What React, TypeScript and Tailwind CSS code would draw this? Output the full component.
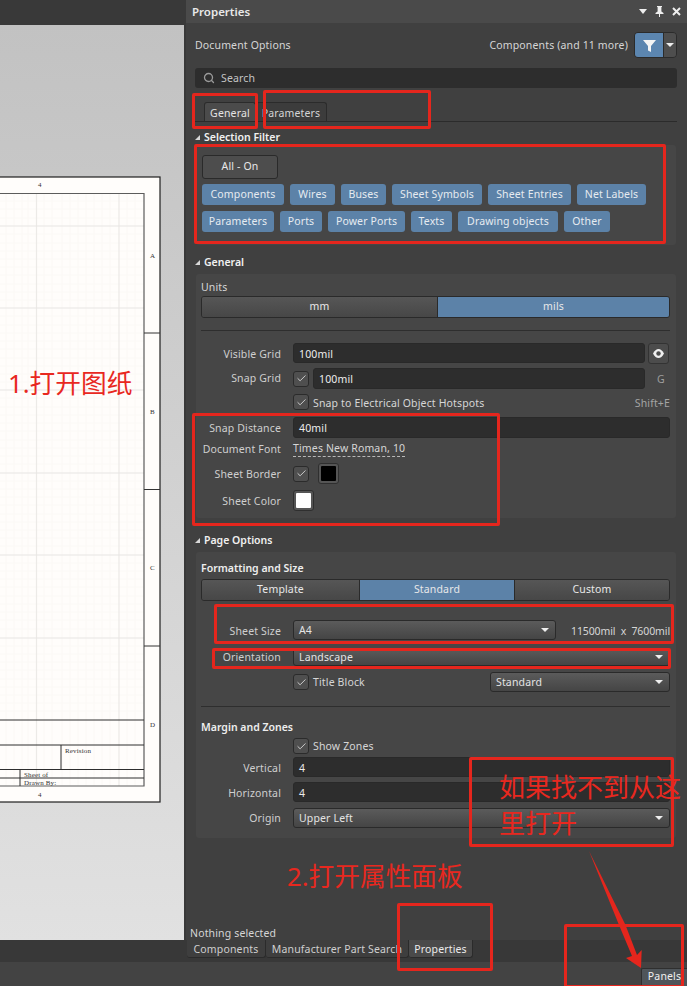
import { Check, Search } from "lucide-react";

const RED = "border-[3px] border-[#e5261d] rounded-[2px]";

const row1 = [
  { label: "Components", width: "w-[82px]" },
  { label: "Wires", width: "w-[45px]" },
  { label: "Buses", width: "w-[45px]" },
  { label: "Sheet Symbols", width: "w-[90px]" },
  { label: "Sheet Entries", width: "w-[83px]" },
  { label: "Net Labels", width: "w-[69px]" },
];
const row2 = [
  { label: "Parameters", width: "w-[72px]" },
  { label: "Ports", width: "w-[42px]" },
  { label: "Power Ports", width: "w-[77px]" },
  { label: "Texts", width: "w-[41px]" },
  { label: "Drawing objects", width: "w-[100px]" },
  { label: "Other", width: "w-[46px]" },
];

function Chip({ label, width }: { label: string; width: string }) {
  return (
    <div className={`${width} h-[21px] flex items-center justify-center rounded-[3px] bg-[#5c82a8] text-[#e6ebf0] whitespace-nowrap`}>
      {label}
    </div>
  );
}

function Heading({ label, className }: { label: string; className: string }) {
  return (
    <div className={`h-[14px] ml-[9px] flex items-center gap-[4px] font-semibold tracking-normal text-[#f0f0f0] ${className}`}>
      <span className="w-0 h-0 border-l-[5px] border-l-transparent border-b-[5px] border-b-[#d8d8d8]" />
      {label}
    </div>
  );
}

// low = text sits one pixel under the row's centre, as most rows do in the reference
function Label({ children, low = true }: { children: string; low?: boolean }) {
  return (
    <div className={`w-[80px] mr-3 shrink-0 text-right text-[#cfcfcf] whitespace-nowrap ${low ? "pt-[2px]" : ""}`}>
      {children}
    </div>
  );
}

function Checkbox() {
  return (
    <div className="w-[16px] h-[16px] shrink-0 rounded-[3px] border border-[#2b2b2b] bg-[#4f4f4f] flex items-center justify-center">
      <Check size={11} strokeWidth={1.8} className="text-[#e4e4e4]" />
    </div>
  );
}

function Input({ value, className }: { value: string; className: string }) {
  return (
    <div className={`rounded-[3px] bg-[#2d2d2d] border border-[#292929] pl-[5px] pt-[2px] flex items-center text-[#ececec] ${className}`}>
      {value}
    </div>
  );
}

function Select({ value, className }: { value: string; className: string }) {
  return (
    <div className={`rounded-[3px] bg-gradient-to-b from-[#5b5b5b] to-[#454545] border border-[#2a2a2a] pl-[5px] pr-[6px] flex items-center justify-between text-[#e4e4e4] ${className}`}>
      {value}
      <span className="w-0 h-0 border-x-[4px] border-x-transparent border-t-[4px] border-t-[#eeeeee]" />
    </div>
  );
}

function Segments({ items, active, widths }: { items: string[]; active: number; widths: string[] }) {
  return (
    <div className="h-[22px] flex rounded-[3px] border border-[#2a2a2a] overflow-hidden">
      {items.map((item, i) => (
        <div
          key={item}
          className={`${widths[i]} pb-[2px] flex items-center justify-center text-[#e8e8e8] ${i > 0 ? "border-l border-[#2a2a2a]" : ""} ${
            i === active ? "bg-[#5c82a8]" : "bg-gradient-to-b from-[#565656] to-[#474747]"
          }`}
        >
          {item}
        </div>
      ))}
    </div>
  );
}

function Sheet() {
  const minorX = [6, 14, 22, 28, 44, 52, 62, 70, 78, 86, 94, 102, 110, 127, 135];
  const minorY = [201, 209, 218, 234, 243, 251, 259, 267, 275, 284, 292, 300, 316, 325, 333, 341, 349, 358, 366, 374, 382, 398, 407, 415, 423, 431, 440, 448, 456, 464, 481, 489, 497, 505, 514, 522, 530, 538, 546, 563, 571, 579, 587, 596, 604, 612, 620, 629, 646, 654, 662, 670, 679, 687, 695, 703, 711];
  return (
    <svg width="161" height="640" viewBox="0 170 161 640" className="block">
      <rect x="-2" y="177" width="162" height="625" fill="#fffdfb" stroke="#1e1e1e" strokeWidth="1.2" />
      {minorX.map((x) => (
        <line key={x} x1={x} x2={x} y1="193" y2="786" stroke="#fbf8f5" strokeWidth="1" />
      ))}
      {minorY.map((y) => (
        <line key={y} x1="0" x2="144" y1={y} y2={y} stroke="#fbf9f6" strokeWidth="1" />
      ))}
      {[36.5, 119].map((x) => (
        <line key={x} x1={x} x2={x} y1="193" y2="786" stroke="#eceae7" strokeWidth="1.2" />
      ))}
      {[226, 308, 390, 473, 555, 638].map((y) => (
        <line key={y} x1="0" x2="144" y1={y} y2={y} stroke="#e8e6e3" strokeWidth="1.2" />
      ))}
      <path d="M0 193.500H144V786H0" fill="none" stroke="#5c5c5c" strokeWidth="1.2" />
      <path d="M144 333H160M144 489.500H160M144 646H160" stroke="#333333" strokeWidth="1" />
      <path d="M0 720H144M0 745H144M0 769.500H144M0 778H144M61 745V769.500M20 769.500V786" stroke="#2e2e2e" strokeWidth="1" />
      <g fontFamily="'Liberation Serif', serif" fontSize="7" fill="#333333">
        <text x="38" y="186.500">4</text>
        <text x="38" y="796.500">4</text>
        <text x="150" y="257.500">A</text>
        <text x="150" y="413.500">B</text>
        <text x="150" y="569.500">C</text>
        <text x="150" y="726.500">D</text>
        <text x="65" y="752.500">Revision</text>
        <text x="24" y="776.500">Sheet   of</text>
        <text x="24" y="785">Drawn By:</text>
      </g>
    </svg>
  );
}

export default function App() {
  return (
    <div className="relative w-[687px] h-[986px] overflow-hidden flex flex-col bg-[#3f3f3f] text-[10.5px] tracking-[0.15px] leading-none font-['Noto_Sans','Noto_Sans_CJK_SC',sans-serif] text-[#dcdcdc]">
      <div className="h-[940px] flex">
        {/* Canvas */}
        <div className="w-[186px] shrink-0 flex flex-col bg-[#393939]">
          <div className="mt-[25px] w-[184px] h-[915px] pt-[145px] bg-gradient-to-b from-[#c2c2c2] to-[#e1e1e1]">
            <Sheet />
          </div>
        </div>

        {/* Properties panel */}
        <div className="flex-1 flex flex-col bg-[#404040]">
          <div className="h-[23px] shrink-0 px-[6px] flex items-center justify-between bg-[#4a4a4a]">
            <span className="font-semibold text-[11.5px] tracking-normal text-[#e8e8e8]">Properties</span>
            <div className="flex items-center gap-[8px]">
              <span className="w-0 h-0 border-x-[4px] border-x-transparent border-t-[5px] border-t-[#eeeeee]" />
              <svg width="9" height="11" viewBox="0 0 9 11" fill="#eeeeee">
                <path d="M2 0h5v1H6.400v4.500L8.500 7v1H5v3H4V8H.5V7l2.100-1.500V1H2z" />
              </svg>
              <svg width="9" height="9" viewBox="0 0 9 9" stroke="#eeeeee" strokeWidth="2">
                <path d="M1 1l7 7M8 1l-7 7" />
              </svg>
            </div>
          </div>

          <div className="mt-[9px] h-[26px] shrink-0 ml-[9px] mr-[10px] flex items-center justify-between">
            <span className="text-[#d6d6d6]">Document Options</span>
            <div className="flex items-center">
              <span className="mr-[6px] text-[#d6d6d6]">Components (and 11 more)</span>
              <div className="h-[26px] flex rounded-[4px] border border-[#2b2b2b] overflow-hidden">
                <div className="w-[28px] flex items-center justify-center bg-[#5c86b0]">
                  <svg width="13" height="13" viewBox="0 0 13 13" fill="#f4f4f4">
                    <path d="M0 1h13L8 7v6L5 11.500V7z" />
                  </svg>
                </div>
                <div className="w-[13px] flex items-center justify-center bg-[#4e4e4e] border-l border-[#2b2b2b]">
                  <span className="w-0 h-0 border-x-[4px] border-x-transparent border-t-[4px] border-t-[#eeeeee]" />
                </div>
              </div>
            </div>
          </div>

          <div className="mt-[10px] h-[20px] shrink-0 ml-[9px] mr-[10px] pl-[8px] flex items-center gap-[6px] rounded-[3px] bg-[#2d2d2d] text-[#c4c4c4]">
            <Search size={12} strokeWidth={2.6} className="text-[#9a9a9a]" />
            Search
          </div>

          <div className="mt-[15px] h-[19px] shrink-0 ml-[9px] mr-[10px] pl-[9px] flex items-end border-b border-[#2b2b2b]">
            <div className="h-[19px] w-[52px] pt-[2px] flex items-center justify-center rounded-t-[3px] border border-b-0 border-[#2b2b2b] bg-[#4b4b4b] text-[#e4e4e4]">
              General
            </div>
            <div className="h-[19px] w-[71px] pt-[2px] flex items-center justify-center rounded-t-[3px] border border-b-0 border-l-0 border-[#2b2b2b] bg-[#3c3c3c] text-[#d4d4d4]">
              Parameters
            </div>
          </div>

          <Heading label="Selection Filter" className="mt-[8px] shrink-0" />
          <div className="mt-[1px] ml-[10px] mr-[11px] h-[100px] shrink-0 pt-[10px] px-[6px] bg-[#464646] rounded-[3px]">
            <div className="w-[76px] h-[24px] pb-[2px] flex items-center justify-center rounded-[3px] border border-[#2a2a2a] bg-[#4d4d4d] text-[#e8e8e8]">
              All - On
            </div>
            <div className="mt-[5px] flex gap-[6px]">
              {row1.map((c) => (
                <Chip key={c.label} label={c.label} width={c.width} />
              ))}
            </div>
            <div className="mt-[6px] flex gap-[6px]">
              {row2.map((c) => (
                <Chip key={c.label} label={c.label} width={c.width} />
              ))}
            </div>
          </div>

          <Heading label="General" className="mt-[10px] shrink-0" />
          <div className="mt-[5px] ml-[10px] mr-[11px] h-[244px] shrink-0 pt-[6px] pl-[5px] pr-[6px] bg-[#464646] rounded-[3px]">
            <div className="h-[14px] flex items-center text-[#d6d6d6]">Units</div>
            <div className="mt-[2px]">
              <Segments items={["mm", "mils"]} active={1} widths={["w-[235px]", "flex-1"]} />
            </div>
            <div className="mt-[12px] h-px bg-[#2e2e2e]" />

            <div className="mt-[12px] h-[20px] flex items-center">
              <Label>Visible Grid</Label>
              <Input value="100mil" className="w-[352px] h-[20px]" />
              <div className="ml-[3px] w-[21px] h-[21px] rounded-[3px] border border-[#333333] bg-[#4c4c4c] flex items-center justify-center">
                <svg width="11" height="9" viewBox="0 0 11 9">
                  <path d="M0 4.500C1.500 1.500 3.500 0 5.500 0s4 1.500 5.500 4.500C9.500 7.500 7.500 9 5.500 9s-4-1.500-5.500-4.500z" fill="#efefef" />
                  <circle cx="5.500" cy="4.500" r="2.200" fill="#4c4c4c" />
                </svg>
              </div>
            </div>
            <div className="mt-[5px] h-[21px] flex items-center">
              <Label low={false}>Snap Grid</Label>
              <Checkbox />
              <Input value="100mil" className="ml-[4px] w-[332px] h-[21px]" />
              <span className="ml-[12px] pt-[2px] text-[#9e9e9e]">G</span>
            </div>
            <div className="mt-[5px] h-[16px] pl-[92px] flex items-center">
              <Checkbox />
              <span className="ml-[4px] pt-[2px] text-[#d6d6d6]">Snap to Electrical Object Hotspots</span>
              <span className="ml-auto pt-[2px] text-[#a4a4a4]">Shift+E</span>
            </div>
            <div className="mt-[7px] h-[21px] flex items-center">
              <Label>Snap Distance</Label>
              <Input value="40mil" className="flex-1 h-[21px]" />
            </div>
            <div className="mt-[3px] h-[16px] flex items-center">
              <Label low={false}>Document Font</Label>
              <span className="relative top-[1px] pb-[2px] border-b border-dashed border-[#b8b8b8] text-[#d6d6d6]">Times New Roman, 10</span>
            </div>
            <div className="mt-[6px] h-[21px] flex items-center">
              <Label>Sheet Border</Label>
              <Checkbox />
              <div className="ml-[9px] w-[21px] h-[21px] rounded-[3px] border border-[#2f2f2f] bg-[#555555] flex items-center justify-center">
                <div className="w-[15px] h-[15px] rounded-[1px] bg-black" />
              </div>
            </div>
            <div className="mt-[5px] h-[22px] flex items-center">
              <Label>Sheet Color</Label>
              <div className="w-[21px] h-[21px] rounded-[3px] border border-[#2f2f2f] bg-[#555555] flex items-center justify-center">
                <div className="w-[15px] h-[15px] rounded-[1px] bg-white" />
              </div>
            </div>
          </div>

          <Heading label="Page Options" className="mt-[15px] shrink-0" />
          <div className="mt-[5px] ml-[10px] mr-[11px] h-[286px] shrink-0 pt-[9px] pl-[5px] pr-[6px] bg-[#464646] rounded-[3px]">
            <div className="h-[14px] flex items-center font-semibold tracking-normal text-[#eeeeee]">Formatting and Size</div>
            <div className="mt-[4px]">
              <Segments items={["Template", "Standard", "Custom"]} active={1} widths={["w-[157px]", "w-[155px]", "flex-1"]} />
            </div>
            <div className="mt-[19px] h-[20px] flex items-center">
              <Label>Sheet Size</Label>
              <Select value="A4" className="w-[263px] h-[20px]" />
              <span className="ml-auto pt-[2px] text-[#d6d6d6] whitespace-pre tracking-[-0.1px]">11500mil  x  7600mil</span>
            </div>
            <div className="mt-[8px] h-[18px] flex items-center">
              <Label low={false}>Orientation</Label>
              <Select value="Landscape" className="flex-1 h-[18px]" />
            </div>
            <div className="mt-[6px] h-[20px] pl-[92px] flex items-center">
              <Checkbox />
              <span className="ml-[4px] text-[#d6d6d6]">Title Block</span>
              <Select value="Standard" className="ml-auto w-[180px] h-[20px]" />
            </div>
            <div className="mt-[14px] h-px bg-[#2e2e2e]" />
            <div className="mt-[13px] h-[14px] flex items-center font-semibold tracking-normal text-[#eeeeee]">Margin and Zones</div>
            <div className="mt-[4px] h-[16px] pl-[92px] flex items-center">
              <Checkbox />
              <span className="ml-[4px] text-[#d6d6d6]">Show Zones</span>
            </div>
            <div className="mt-[3px] h-[20px] flex items-center">
              <Label>Vertical</Label>
              <Input value="4" className="flex-1 h-[20px]" />
            </div>
            <div className="mt-[5px] h-[20px] flex items-center">
              <Label>Horizontal</Label>
              <Input value="4" className="flex-1 h-[20px]" />
            </div>
            <div className="mt-[6px] h-[20px] flex items-center">
              <Label low={false}>Origin</Label>
              <Select value="Upper Left" className="flex-1 h-[20px]" />
            </div>
          </div>

          <div className="relative z-10 mt-auto h-[12px] ml-[4px] text-[#d6d6d6]">Nothing selected</div>
        </div>
      </div>

      {/* Bottom tabs */}
      <div className="h-[22px] shrink-0 pl-[187px] flex items-start bg-[#383838]">
        <div className="w-[79px] h-[18px] pt-[1px] flex items-center justify-center rounded-b-[3px] border-r border-b border-[#2b2b2b] bg-[#3e3e3e] text-[#cfcfcf]">Components</div>
        <div className="w-[143px] h-[18px] pt-[1px] flex items-center justify-center rounded-b-[3px] border-r border-b border-[#2b2b2b] bg-[#3e3e3e] text-[#cfcfcf] whitespace-nowrap">Manufacturer Part Search</div>
        <div className="w-[64px] h-[18px] pt-[1px] flex items-center justify-center rounded-b-[3px] border-r border-b border-[#2b2b2b] bg-[#4a4a4a] text-[#ececec]">Properties</div>
      </div>
      <div className="h-[24px] shrink-0 flex items-end justify-end bg-[#434343]">
        <div className="w-[46px] h-[18px] pb-[2px] flex items-center justify-center rounded-tl-[2px] border-l border-t border-[#2f2f2f] bg-[#4f555a] text-[#f0f0f0]">Panels</div>
      </div>

      {/* Red annotations drawn over the screenshot */}
      <div className={`absolute left-[192px] top-[93px] w-[66px] h-[36px] ${RED}`} />
      <div className={`absolute left-[263px] top-[90px] w-[168px] h-[39px] ${RED}`} />
      <div className={`absolute left-[194px] top-[144px] w-[472px] h-[100px] ${RED}`} />
      <div className={`absolute left-[192px] top-[413px] w-[308px] h-[113px] ${RED}`} />
      <div className={`absolute left-[214px] top-[604px] w-[460px] h-[40px] ${RED}`} />
      <div className={`absolute left-[212px] top-[648px] w-[459px] h-[21px] ${RED}`} />
      <div className={`absolute left-[469px] top-[757px] w-[205px] h-[90px] ${RED}`} />
      <div className={`absolute left-[397px] top-[903px] w-[96px] h-[68px] ${RED}`} />
      <div className={`absolute left-[564px] top-[924px] w-[120px] h-[64px] ${RED}`} />

      <svg className="absolute left-[585px] top-[848px]" width="62" height="122" viewBox="0 0 62 122" fill="#e5261d">
        <path d="M4 3L40.500 77 52 107 56.700 102 56 120 41 110 47 108 34 77z" />
      </svg>

      <div className="absolute left-[8px] top-[368px] text-[25.7px] tracking-normal leading-[32px] text-[#e8281f] whitespace-nowrap">1.打开图纸</div>
      <div className="absolute left-[287px] top-[861px] text-[25.7px] tracking-normal leading-[32px] text-[#e8281f] whitespace-nowrap">2.打开属性面板</div>
      <div className="absolute left-[499px] top-[771px] text-[26px] tracking-normal leading-[32px] text-[#e8281f] whitespace-nowrap">如果找不到从这</div>
      <div className="absolute left-[499px] top-[807px] text-[26px] tracking-normal leading-[32px] text-[#e8281f] whitespace-nowrap">里打开</div>
    </div>
  );
}
